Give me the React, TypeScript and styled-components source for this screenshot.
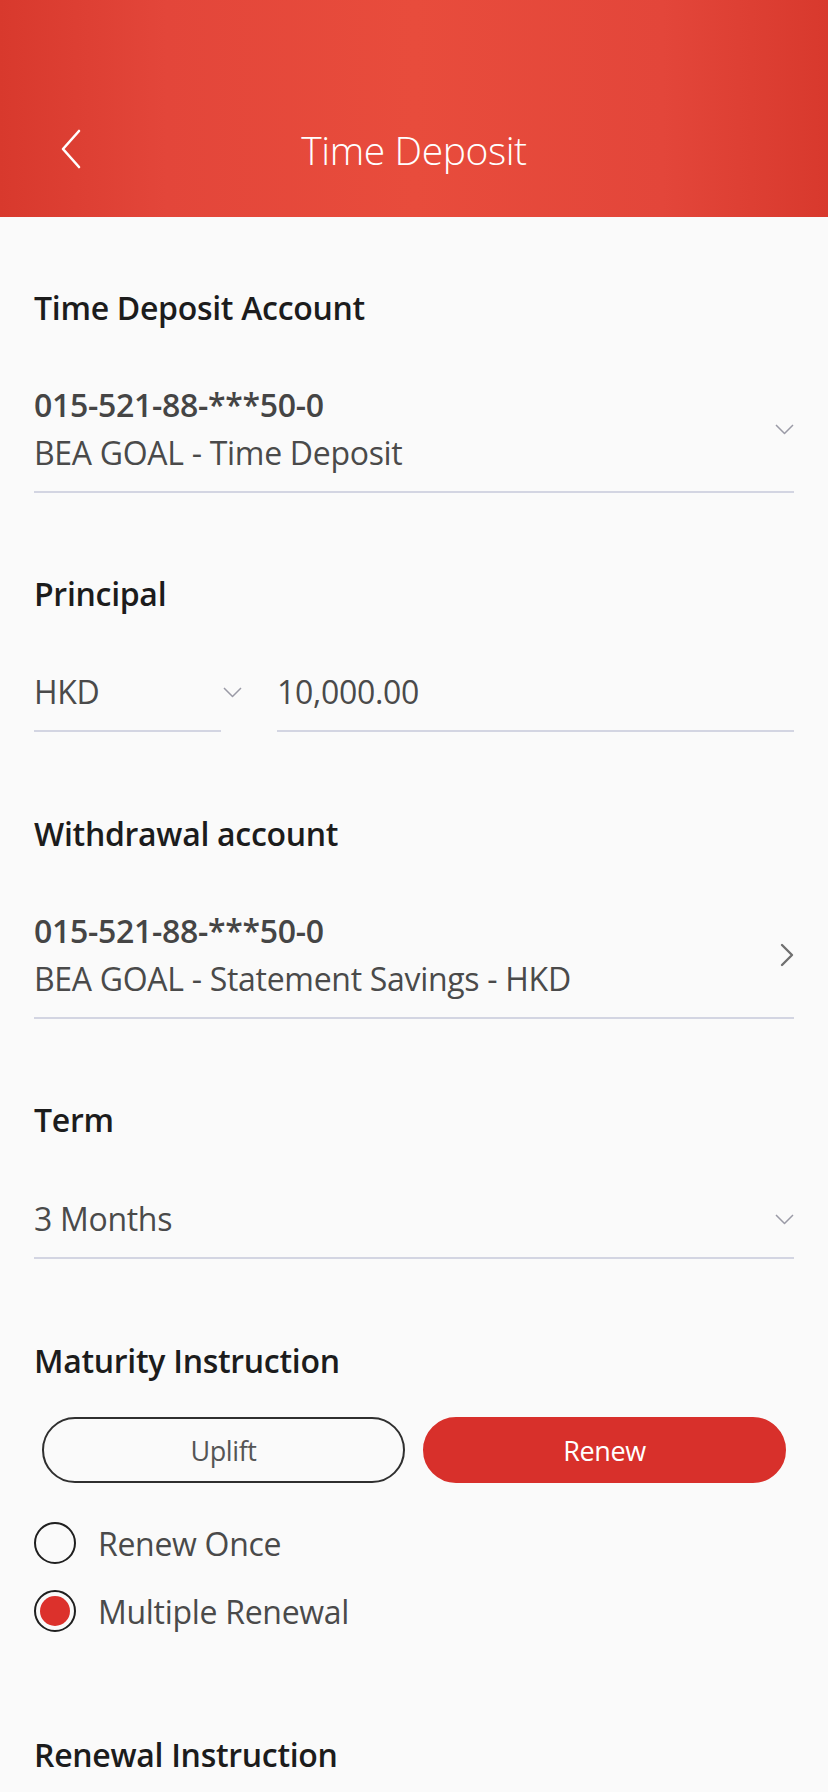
import React from "react";
import styled, { createGlobalStyle } from "styled-components";

const Global = createGlobalStyle`
  html, body { margin: 0; padding: 0; background: #fafafa; }
  body { font-family: "Open Sans", "Noto Sans", sans-serif; -webkit-font-smoothing: antialiased; }
  * { box-sizing: border-box; }
`;

const Page = styled.div`
  width: 828px;
  min-height: 1792px;
  background: #fafafa;
  overflow: hidden;
`;

const Header = styled.header`
  height: 217px;
  background: linear-gradient(90deg, #d8392d 0%, #e3463a 20%, #e84c3c 50%, #e3463a 80%, #d8392d 100%);
  display: flex;
  align-items: flex-end;
  padding: 0 0 38px;
`;

const HeaderRow = styled.div`
  width: 100%;
  height: 60px;
  display: grid;
  grid-template-columns: 120px 1fr 120px;
  align-items: center;
`;

const BackButton = styled.button`
  border: 0;
  background: none;
  padding: 0 0 0 60px;
  height: 60px;
  display: flex;
  align-items: center;
  cursor: pointer;
`;

const Title = styled.h1`
  margin: 0;
  text-align: center;
  color: #fff;
  font-family: "Open Sans", sans-serif;
  font-weight: 300;
  font-size: 39px;
  letter-spacing: -0.4px;
`;

const Content = styled.main`
  padding: 0 34px;
  display: flex;
  flex-direction: column;
`;

const Section = styled.section<{ $top: number }>`
  padding-top: ${(p) => p.$top}px;
  display: flex;
  flex-direction: column;
`;

const Label = styled.div`
  font-size: 32px;
  line-height: 36px;
  font-weight: 600;
  color: #1c1c1c;
  letter-spacing: -0.3px;
`;

const Field = styled.div<{ $top?: number }>`
  margin-top: ${(p) => p.$top ?? 55}px;
  display: flex;
  align-items: center;
  justify-content: space-between;
  padding-bottom: 14px;
  border-bottom: 2px solid #d3d5e2;
`;

const FieldText = styled.div`
  display: flex;
  flex-direction: column;
`;

const AccountNo = styled.div`
  font-size: 32px;
  line-height: 48px;
  font-weight: 600;
  color: #454545;
  letter-spacing: -0.3px;
`;

const Value = styled.div`
  font-size: 32px;
  line-height: 48px;
  font-weight: 400;
  color: #4a4a4a;
  letter-spacing: -0.3px;
`;

const IconSlot = styled.div`
  display: flex;
  align-items: center;
  justify-content: flex-end;
  width: 24px;
`;

const PrincipalRow = styled.div`
  margin-top: 56px;
  display: grid;
  grid-template-columns: 187px 56px 1fr;
  align-items: start;
`;

const InlineChevron = styled.div`
  height: 48px;
  display: flex;
  align-items: center;
  padding-left: 2px;
`;

const ButtonRow = styled.div`
  margin-top: 38px;
  padding: 0 8px;
  display: grid;
  grid-template-columns: 1fr 1fr;
  column-gap: 18px;
`;

const Pill = styled.button<{ $active?: boolean }>`
  height: 66px;
  border-radius: 33px;
  font-family: "Open Sans", sans-serif;
  font-size: 27px;
  font-weight: 400;
  letter-spacing: -0.4px;
  border: 2px solid ${(p) => (p.$active ? "#d8302b" : "#2f2f2f")};
  background: ${(p) => (p.$active ? "#d8302b" : "transparent")};
  color: ${(p) => (p.$active ? "#fff" : "#555")};
  cursor: pointer;
`;

const RadioList = styled.div`
  margin-top: 32px;
  display: flex;
  flex-direction: column;
  gap: 12px;
`;

const RadioRow = styled.label`
  height: 56px;
  display: flex;
  align-items: center;
  gap: 22px;
  cursor: pointer;
`;

const RadioCircle = styled.span<{ $checked?: boolean }>`
  width: 42px;
  height: 42px;
  border-radius: 50%;
  border: 2.5px solid #1f1f1f;
  display: flex;
  align-items: center;
  justify-content: center;
  &::after {
    content: "";
    width: 30px;
    height: 30px;
    border-radius: 50%;
    background: ${(p) => (p.$checked ? "#dc312c" : "transparent")};
  }
`;

const RadioText = styled.span`
  font-size: 32px;
  font-weight: 400;
  color: #4a4a4a;
  letter-spacing: -0.3px;
`;

const ChevronDown = () => (
  <svg width="19" height="11" viewBox="0 0 19 11" fill="none">
    <path d="M1 1 L9.5 9.5 L18 1" stroke="#9a9aa6" strokeWidth="1.5" strokeLinejoin="round" />
  </svg>
);

const ChevronRight = () => (
  <svg width="14" height="24" viewBox="0 0 14 24" fill="none">
    <path d="M2 2 L12 12 L2 22" stroke="#707070" strokeWidth="2.4" strokeLinecap="round" strokeLinejoin="round" />
  </svg>
);

const BackIcon = () => (
  <svg width="22" height="40" viewBox="0 0 22 40" fill="none">
    <path d="M19 2 L3 20 L19 38" stroke="#fff" strokeWidth="2.6" strokeLinecap="round" strokeLinejoin="round" />
  </svg>
);

export default function App() {
  return (
    <Page>
      <Global />
      <Header>
        <HeaderRow>
          <BackButton aria-label="Back">
            <BackIcon />
          </BackButton>
          <Title>Time Deposit</Title>
          <div />
        </HeaderRow>
      </Header>
      <Content>
        <Section $top={73}>
          <Label>Time Deposit Account</Label>
          <Field>
            <FieldText>
              <AccountNo>015-521-88-***50-0</AccountNo>
              <Value>BEA GOAL - Time Deposit</Value>
            </FieldText>
            <IconSlot>
              <ChevronDown />
            </IconSlot>
          </Field>
        </Section>

        <Section $top={83}>
          <Label>Principal</Label>
          <PrincipalRow>
            <Field $top={0}>
              <Value>HKD</Value>
            </Field>
            <InlineChevron>
              <ChevronDown />
            </InlineChevron>
            <Field $top={0}>
              <Value>10,000.00</Value>
            </Field>
          </PrincipalRow>
        </Section>

        <Section $top={84}>
          <Label>Withdrawal account</Label>
          <Field>
            <FieldText>
              <AccountNo>015-521-88-***50-0</AccountNo>
              <Value>BEA GOAL - Statement Savings - HKD</Value>
            </FieldText>
            <IconSlot>
              <ChevronRight />
            </IconSlot>
          </Field>
        </Section>

        <Section $top={83}>
          <Label>Term</Label>
          <Field $top={57}>
            <Value>3 Months</Value>
            <IconSlot>
              <ChevronDown />
            </IconSlot>
          </Field>
        </Section>

        <Section $top={84}>
          <Label>Maturity Instruction</Label>
          <ButtonRow>
            <Pill>Uplift</Pill>
            <Pill $active>Renew</Pill>
          </ButtonRow>
          <RadioList>
            <RadioRow>
              <RadioCircle />
              <RadioText>Renew Once</RadioText>
            </RadioRow>
            <RadioRow>
              <RadioCircle $checked />
              <RadioText>Multiple Renewal</RadioText>
            </RadioRow>
          </RadioList>
        </Section>

        <Section $top={98}>
          <Label>Renewal Instruction</Label>
        </Section>
      </Content>
    </Page>
  );
}
